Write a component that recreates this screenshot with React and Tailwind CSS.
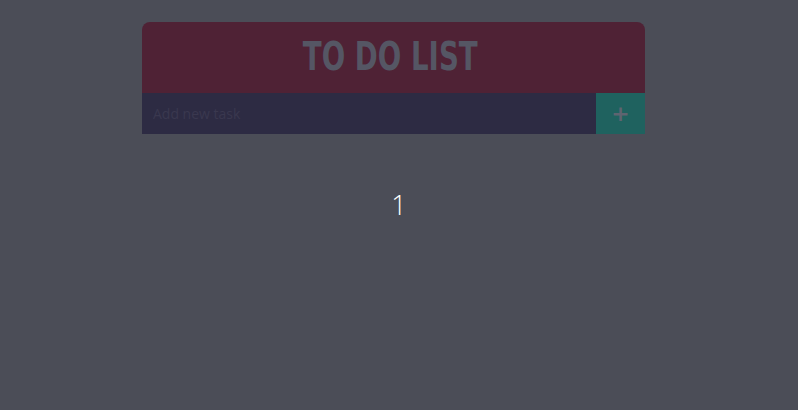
import React, { useState } from 'react'

function App() {
  const [task, setTask] = useState('')

  return (
    <div className="min-h-screen w-full bg-[#4b4d57] flex flex-col pt-[22px]" style={{ fontFamily: '"DejaVu Sans", sans-serif' }}>
      <div className="flex justify-center pr-[11px]">
        <div className="w-[503px] flex flex-col">
          <div className="h-[71px] bg-[#4f2235] rounded-t-[8px] flex items-center justify-center">
            <h1 className="inline-block scale-x-[0.71] text-[39px] font-bold text-[#555664] leading-none -mt-[3px] -ml-[6px]">
              TO DO LIST
            </h1>
          </div>
          <div className="h-[41px] flex">
            <input
              value={task}
              onChange={(e) => setTask(e.target.value)}
              placeholder="Add new task"
              className="flex-1 h-full bg-[#2d2b43] px-[11px] text-[14px] text-white placeholder:text-[#3a384f] outline-none"
              style={{ fontFamily: '"Open Sans", sans-serif' }}
            />
            <button className="w-[49px] h-full bg-[#1f625f] flex items-center justify-center text-[#5e6470] text-[22px] font-bold leading-none">
              +
            </button>
          </div>
        </div>
      </div>
      <div className="mt-[57px] text-center text-[27px] text-white font-light leading-none" style={{ fontFamily: '"Open Sans", sans-serif' }}>1</div>
    </div>
  )
}

export default App
